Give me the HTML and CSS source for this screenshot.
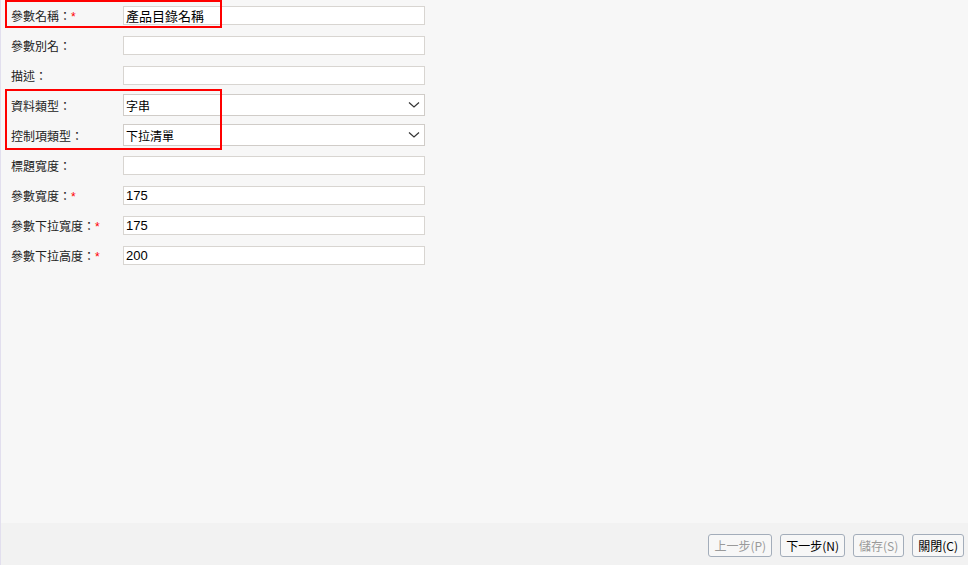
FILE: index.html
```html
<!DOCTYPE html>
<html lang="zh-Hant">
<head>
    <meta charset="UTF-8">
    <title>參數設定</title>
    <link rel="stylesheet" href="styles.css">
</head>
<body>
    <div class="main">
        <div class="form">
            <div class="row">
                <label class="label">參數名稱：<span class="req">*</span></label>
                <input class="field" type="text" value="產品目錄名稱">
            </div>
            <div class="row">
                <label class="label">參數別名：</label>
                <input class="field" type="text" value="">
            </div>
            <div class="row">
                <label class="label">描述：</label>
                <input class="field" type="text" value="">
            </div>
            <div class="row">
                <label class="label">資料類型：</label>
                <div class="select">
                    <span>字串</span>
                    <svg width="12" height="8" viewBox="0 0 12 8"><path d="M1 1.5 L6 6 L11 1.5" fill="none" stroke="#333" stroke-width="1.2"/></svg>
                </div>
            </div>
            <div class="row">
                <label class="label">控制項類型：</label>
                <div class="select">
                    <span>下拉清單</span>
                    <svg width="12" height="8" viewBox="0 0 12 8"><path d="M1 1.5 L6 6 L11 1.5" fill="none" stroke="#333" stroke-width="1.2"/></svg>
                </div>
            </div>
            <div class="row">
                <label class="label">標題寬度：</label>
                <input class="field" type="text" value="">
            </div>
            <div class="row">
                <label class="label">參數寬度：<span class="req">*</span></label>
                <input class="field" type="text" value="175">
            </div>
            <div class="row">
                <label class="label">參數下拉寬度：<span class="req">*</span></label>
                <input class="field" type="text" value="175">
            </div>
            <div class="row">
                <label class="label">參數下拉高度：<span class="req">*</span></label>
                <input class="field" type="text" value="200">
            </div>

            <!-- annotation boxes -->
            <div class="mark mark-name"></div>
            <div class="mark mark-type"></div>
        </div>
    </div>
    <div class="footer">
        <button class="btn" disabled>上一步(P)</button>
        <button class="btn">下一步(N)</button>
        <button class="btn" disabled>儲存(S)</button>
        <button class="btn">關閉(C)</button>
    </div>
</body>
</html>
```

FILE: styles.css
```css
html, body {
    margin: 0;
    height: 100%;
}
body {
    display: flex;
    flex-direction: column;
    background-color: #f7f7f7;
    border-left: 1px solid #e2dfee;
    font-family: "Noto Sans CJK TC", "Liberation Sans", sans-serif;
    font-size: 12px;
    color: #222;
    box-sizing: border-box;
}
.main {
    flex: 1;
}
.form {
    position: relative;
    padding-left: 10px;
}
.row {
    display: flex;
    align-items: center;
    height: 30px;
}
.label {
    width: 112px;
    white-space: nowrap;
}
.req {
    color: #f00;
    font-family: "Liberation Sans", sans-serif;
}
.field {
    width: 302px;
    height: 19px;
    box-sizing: border-box;
    margin: 0;
    padding: 0 2px;
    border: 1px solid #d8d5d1;
    background: #fff;
    font-family: "Liberation Sans", "Noto Sans CJK TC", sans-serif;
    font-size: 13px;
    color: #000;
    outline: none;
}
.select {
    display: flex;
    align-items: center;
    justify-content: space-between;
    width: 302px;
    height: 22px;
    box-sizing: border-box;
    padding: 0 4px 0 2px;
    border: 1px solid #d0ccc8;
    background: #fff;
    color: #000;
    font-size: 12px;
}
.select svg {
    display: block;
}
.mark {
    position: absolute;
    left: 4px;
    width: 213px;
    border: 2px solid #f00;
}
.mark-name {
    top: 0;
    height: 24px;
}
.mark-type {
    top: 89px;
    height: 57px;
}
.footer {
    display: flex;
    justify-content: flex-end;
    align-items: center;
    gap: 8px;
    height: 42px;
    padding: 2px 4px 0 0;
    box-sizing: border-box;
    background-color: #f2f2f2;
}
.btn {
    height: 23px;
    padding: 0 5px;
    border: 1px solid #a3adba;
    border-radius: 3px;
    background: #f7f7f7;
    font-family: "Noto Sans CJK TC", "Liberation Sans", sans-serif;
    font-size: 12px;
    color: #000;
}
.btn:disabled {
    color: #9a9a9a;
}
```
